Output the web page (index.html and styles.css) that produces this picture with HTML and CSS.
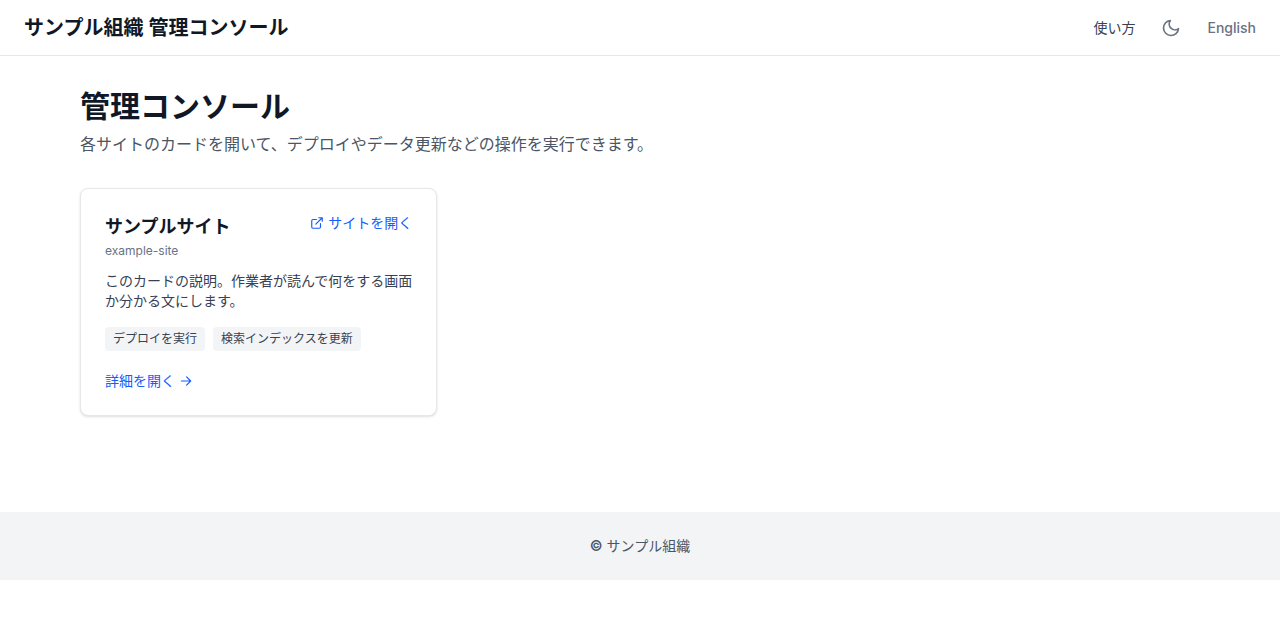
FILE: index.html
```html
<!DOCTYPE html>
<html lang="ja">
<head>
    <meta charset="UTF-8">
    <meta name="viewport" content="width=device-width, initial-scale=1.0">
    <title>サンプル組織 管理コンソール</title>
    <link rel="stylesheet" href="styles.css">
</head>
<body>
    <header class="site-header">
        <a class="brand" href="#">サンプル組織 管理コンソール</a>
        <nav class="site-nav">
            <a class="nav-link" href="#">使い方</a>
            <button class="theme-toggle" type="button" aria-label="ダークモード">
                <svg class="icon-moon" viewBox="0 0 24 24" aria-hidden="true">
                    <path d="M21 12.79A9 9 0 1 1 11.21 3 7 7 0 0 0 21 12.79z"/>
                </svg>
            </button>
            <a class="lang-link" href="#" lang="en">English</a>
        </nav>
    </header>

    <main class="container">
        <h1>管理コンソール</h1>
        <p class="lead">各サイトのカードを開いて、デプロイやデータ更新などの操作を実行できます。</p>

        <div class="card-grid">
            <article class="card">
                <div class="card-head">
                    <div>
                        <h2>サンプルサイト</h2>
                        <p class="site-id">example-site</p>
                    </div>
                    <a class="card-link" href="#">
                        <svg class="icon-small" viewBox="0 0 24 24" aria-hidden="true">
                            <path d="M18 13v6a2 2 0 0 1-2 2H5a2 2 0 0 1-2-2V8a2 2 0 0 1 2-2h6M15 3h6v6M10 14 21 3"/>
                        </svg>
                        サイトを開く
                    </a>
                </div>
                <p class="description">このカードの説明。作業者が読んで何をする画面か分かる文にします。</p>
                <ul class="tags">
                    <li>デプロイを実行</li>
                    <li>検索インデックスを更新</li>
                </ul>
                <a class="card-link" href="#">
                    詳細を開く
                    <svg class="icon-small" viewBox="0 0 24 24" aria-hidden="true">
                        <path d="M4 12h16M13 5l7 7-7 7"/>
                    </svg>
                </a>
            </article>
        </div>
    </main>

    <footer class="site-footer">
        <p><span class="copyright-mark">©</span> サンプル組織</p>
    </footer>
</body>
</html>
```

FILE: styles.css
```css
/* Base styles */
* {
    box-sizing: border-box;
}

body {
    margin: 0;
    font-family: Inter, "Noto Sans CJK JP", sans-serif;
    font-size: 16px;
    line-height: 24px;
    background: #ffffff;
    color: #101828;
}

h1, h2, p, ul {
    margin: 0;
    padding: 0;
}

a {
    text-decoration: none;
}

svg {
    fill: none;
    stroke: currentColor;
    stroke-linecap: round;
    stroke-linejoin: round;
}

/* Header styles */
.site-header {
    display: flex;
    align-items: center;
    justify-content: space-between;
    height: 56px;
    padding: 0 24px;
    border-bottom: 1px solid #e5e7eb;
}

.brand {
    font-size: 20px;
    font-weight: 600;
    line-height: 28px;
    color: #101828;
}

.site-nav {
    display: flex;
    align-items: center;
    gap: 16px;
    font-size: 14px;
    line-height: 20px;
}

.nav-link {
    color: #364153;
}

.lang-link {
    font-weight: 500;
    color: #6a7282;
}

.theme-toggle {
    display: flex;
    padding: 10px;
    border: none;
    background: none;
    color: #6a7282;
    cursor: pointer;
}

.icon-moon {
    width: 20px;
    height: 20px;
    stroke-width: 2;
}

/* Page content */
.container {
    max-width: 1152px;
    margin: 0 auto;
    padding: 32px 16px;
}

h1 {
    font-size: 30px;
    font-weight: 700;
    line-height: 36px;
}

.lead {
    margin-top: 8px;
    color: #4a5565;
}

/* Site cards */
.card-grid {
    display: grid;
    grid-template-columns: repeat(3, 1fr);
    gap: 24px;
    margin-top: 32px;
}

.card {
    padding: 24px;
    border: 1px solid #e5e7eb;
    border-radius: 8px;
    background: #ffffff;
    box-shadow: 0 1px 3px rgba(0, 0, 0, 0.1), 0 1px 2px -1px rgba(0, 0, 0, 0.1);
}

.card-head {
    display: flex;
    align-items: flex-start;
    justify-content: space-between;
    gap: 12px;
}

h2 {
    font-size: 18px;
    font-weight: 600;
    line-height: 28px;
}

.site-id {
    margin-top: 2px;
    font-size: 12px;
    line-height: 16px;
    color: #6a7282;
}

.card-link {
    display: inline-flex;
    align-items: center;
    gap: 4px;
    font-size: 14px;
    line-height: 20px;
    color: #155dfc;
}

.icon-small {
    width: 14px;
    height: 14px;
    stroke-width: 2;
}

.description {
    margin-top: 12px;
    font-size: 14px;
    line-height: 20px;
    color: #364153;
}

.tags {
    display: flex;
    flex-wrap: wrap;
    gap: 8px;
    margin: 16px 0 20px;
    list-style: none;
}

.tags li {
    padding: 4px 8px;
    border-radius: 4px;
    background: #f3f4f6;
    font-size: 12px;
    line-height: 16px;
    color: #364153;
}

.card > .card-link {
    display: flex;
}

/* Footer */
.site-footer {
    margin-top: 64px;
    padding: 24px;
    background: #f3f4f6;
    font-size: 14px;
    line-height: 20px;
    text-align: center;
    color: #4a5565;
}

.copyright-mark {
    font-weight: 600;
}

/* Responsive styling */
@media (max-width: 900px) {
    .card-grid {
        grid-template-columns: 1fr;
    }
}
```
